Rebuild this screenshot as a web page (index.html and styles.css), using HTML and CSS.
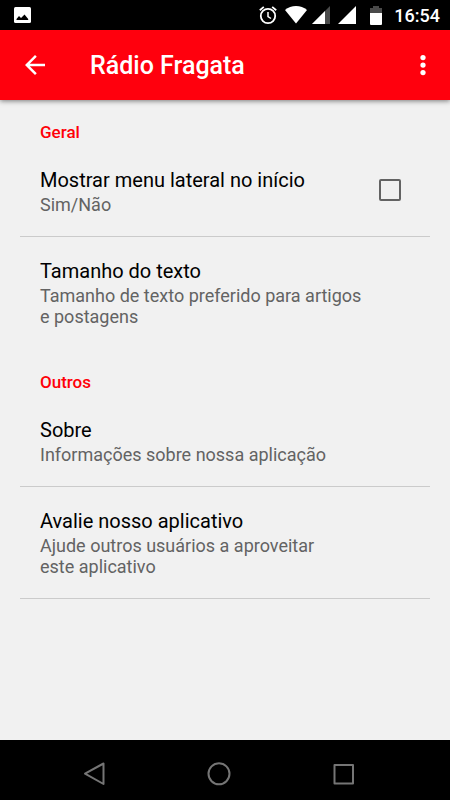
FILE: index.html
```html
<!DOCTYPE html>
<html lang="pt-BR">
<head>
  <meta charset="UTF-8" />
  <meta name="viewport" content="width=device-width, initial-scale=1.0"/>
  <title>Rádio Fragata</title>
  <link rel="stylesheet" href="styles.css">
</head>
<body>
  <div class="status-bar">
    <svg class="status-photo" width="17" height="16" viewBox="0 0 17 16">
      <rect width="17" height="16" rx="1.5" fill="#fff"/>
      <path d="M2.500 13v-1l2.500-3 2 2L10.500 7.500l3.700 4.500v1z" fill="#000"/>
    </svg>
    <div class="status-icons">
      <svg width="18" height="19" viewBox="0 0 18 19" fill="none" stroke="#fff">
        <circle cx="9" cy="10" r="7.200" stroke-width="1.800"/>
        <path d="M9 6v4.500l3 2" stroke-width="1.500"/>
        <path d="M.8 4.200L4.800 .9M17.200 4.200L13.200 .9" stroke-width="1.800"/>
      </svg>
      <svg class="icon-wifi" width="22" height="18" viewBox="0 0 22 18">
        <path d="M11 17.500L0 4C3 1.500 7 0 11 0s8 1.500 11 4z" fill="#fff"/>
      </svg>
      <svg class="icon-signal" width="19" height="18" viewBox="0 0 19 18">
        <path d="M18 0v18H0z" fill="#4a4a4a"/>
        <path d="M13 5v13H0z" fill="#fff"/>
      </svg>
      <svg class="icon-signal-full" width="18" height="18" viewBox="0 0 18 18">
        <path d="M18 0v18H0z" fill="#fff"/>
      </svg>
      <svg class="icon-battery" width="12" height="19" viewBox="0 0 12 19">
        <path d="M0 2h3V0h6v2h3v5H0z" fill="#4a4a4a"/>
        <path d="M0 7h12v11q0 1-1 1H1q-1 0-1-1z" fill="#fff"/>
      </svg>
      <span class="clock">16:54</span>
    </div>
  </div>

  <header class="toolbar">
    <button class="icon-button" aria-label="Voltar">
      <svg width="30" height="30" viewBox="0 0 24 24">
        <path d="M20 11H7.830l5.590-5.590L12 4l-8 8 8 8 1.410-1.410L7.830 13H20v-2z" fill="#fff"/>
      </svg>
    </button>
    <h1>Rádio Fragata</h1>
    <button class="icon-button" aria-label="Mais opções">
      <svg width="30" height="30" viewBox="0 0 24 24" fill="#fff">
        <circle cx="12" cy="6" r="2.100"/>
        <circle cx="12" cy="12" r="2.100"/>
        <circle cx="12" cy="18" r="2.100"/>
      </svg>
    </button>
  </header>

  <main class="settings">
    <section>
      <h2>Geral</h2>
      <div class="item divider">
        <label class="item-text" for="menu-lateral">
          <span class="item-title">Mostrar menu lateral no início</span>
          <span class="item-summary">Sim/Não</span>
        </label>
        <input type="checkbox" id="menu-lateral">
      </div>
      <div class="item">
        <div class="item-text">
          <span class="item-title">Tamanho do texto</span>
          <span class="item-summary">Tamanho de texto preferido para artigos<br>e postagens</span>
        </div>
      </div>
    </section>

    <section>
      <h2>Outros</h2>
      <div class="item divider">
        <div class="item-text">
          <span class="item-title">Sobre</span>
          <span class="item-summary">Informações sobre nossa aplicação</span>
        </div>
      </div>
      <div class="item divider">
        <div class="item-text">
          <span class="item-title">Avalie nosso aplicativo</span>
          <span class="item-summary">Ajude outros usuários a aproveitar<br>este aplicativo</span>
        </div>
      </div>
    </section>
  </main>

  <nav class="nav-bar">
    <button class="icon-button" aria-label="Voltar">
      <svg width="24" height="24" viewBox="0 0 24 24" fill="none" stroke="#757575" stroke-width="2" stroke-linejoin="round">
        <path d="M21.500 1.500v20.500L3 11.700z"/>
      </svg>
    </button>
    <button class="icon-button" aria-label="Início">
      <svg width="24" height="24" viewBox="0 0 24 24" fill="none" stroke="#757575" stroke-width="2">
        <circle cx="12" cy="11.800" r="10.500"/>
      </svg>
    </button>
    <button class="icon-button" aria-label="Recentes">
      <svg width="24" height="24" viewBox="0 0 24 24" fill="none" stroke="#757575" stroke-width="2" stroke-linejoin="round">
        <rect x="2.500" y="3" width="18.500" height="18.500"/>
      </svg>
    </button>
  </nav>
</body>
</html>
```
FILE: styles.css
```css
* {
  box-sizing: border-box;
}

body {
  margin: 0;
  font-family: Roboto, sans-serif;
  background-color: #f1f1f1;
  color: #000;
  display: flex;
  flex-direction: column;
  min-height: 100vh;
}

.status-bar {
  height: 30px;
  padding: 0 10px 0 14px;
  background-color: #000;
  color: #fff;
  display: flex;
  align-items: center;
  justify-content: space-between;
}

.status-icons {
  display: flex;
  align-items: center;
}

.icon-wifi {
  margin-left: 8px;
}

.icon-signal {
  margin-left: 5px;
}

.icon-signal-full {
  margin-left: 7px;
}

.icon-battery {
  margin-left: 14px;
}

.clock {
  margin-left: 12px;
  padding-top: 2px;
  font-size: 18px;
  font-weight: 500;
  line-height: 28px;
}

.toolbar {
  height: 70px;
  padding: 0 7px 0 15px;
  background-color: #ff000d;
  box-shadow: 0 1px 5px rgba(0, 0, 0, 0.5);
  display: flex;
  align-items: center;
}

.toolbar h1 {
  flex: 1;
  margin: 0 0 0 35px;
  padding-top: 2px;
  color: #fff;
  font-size: 25px;
  font-weight: 500;
  line-height: 30px;
}

.icon-button {
  width: 40px;
  height: 40px;
  padding: 0;
  border: none;
  background: none;
  display: flex;
  align-items: center;
  justify-content: center;
  cursor: pointer;
}

.settings {
  flex: 1;
  padding: 0 20px;
}

section + section {
  margin-top: 2px;
}

h2 {
  margin: 0;
  padding: 21px 20px 3px;
  color: #ff0008;
  font-size: 17px;
  font-weight: 500;
  line-height: 22px;
}

.item {
  padding: 22px 20px 21px;
  display: flex;
  align-items: center;
}

.divider {
  border-bottom: 1px solid #cbcbcb;
}

.item-text {
  flex: 1;
}

.item-title,
.item-summary {
  display: block;
}

.item-title {
  margin-bottom: 2px;
  font-size: 20px;
  line-height: 24px;
}

.item-summary {
  color: #636363;
  font-size: 18px;
  line-height: 21px;
}

input[type="checkbox"] {
  appearance: none;
  width: 22px;
  height: 22px;
  margin: 0 9px 3px 0;
  border: 2px solid #636363;
  border-radius: 2px;
}

input[type="checkbox"]:checked {
  background-color: #ff000d;
  border-color: #ff000d;
}

.nav-bar {
  height: 60px;
  padding: 8px 13px 0 0;
  background-color: #000;
  display: flex;
  align-items: center;
  justify-content: center;
  gap: 85px;
}
```
